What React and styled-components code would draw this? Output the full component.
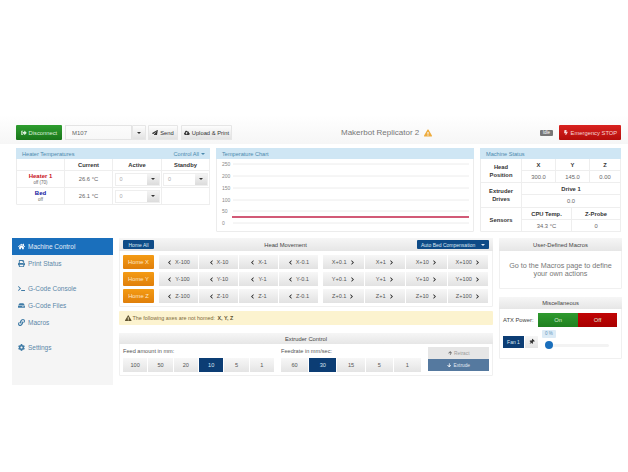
import React from "react";
import styled, { createGlobalStyle, css } from "styled-components";
import {
  FaHome, FaPrint, FaTerminal, FaHdd, FaLink, FaCog, FaChevronLeft, FaChevronRight,
  FaExclamationTriangle, FaBolt, FaPaperPlane, FaCloudUploadAlt, FaSignOutAlt,
  FaThumbtack, FaArrowUp, FaArrowDown,
} from "react-icons/fa";

const GlobalStyle = createGlobalStyle`
  html, body { margin: 0; padding: 0; background: #fff; }
  body { font-family: "Liberation Sans", Arial, sans-serif; color: #333; font-size: 6.5px; }
  * { box-sizing: border-box; }
`;

const Page = styled.div`
  width: 628px;
  height: 472px;
  overflow: hidden;
  padding-top: 115px;
`;

const Navbar = styled.div`
  height: 29px;
  padding: 10px 7px 0 16px;
  display: flex;
  align-items: flex-start;
  background: linear-gradient(to bottom, #fff, #f6f6f6);
`;

const Btn = styled.div`
  height: 15px;
  display: flex;
  align-items: center;
  justify-content: center;
  gap: 2px;
  font-size: 5.8px;
  color: #333;
  white-space: nowrap;
  border-radius: 1px;
  background: linear-gradient(to bottom, #fff, #e0e0e0);
  box-shadow: inset 0 0 0 1px #e6e6e6;
  width: ${(p) => p.$w}px;
  margin-left: ${(p) => p.$ml || 0}px;
  ${(p) => p.$kind === "green" && css`
    background: linear-gradient(to bottom, #2f9e30, #19761a);
    color: #dff0df;
    box-shadow: none;
  `}
  ${(p) => p.$kind === "red" && css`
    background: linear-gradient(to bottom, #d9231f, #b40d0b);
    color: #f5d5d5;
    box-shadow: none;
  `}
`;

const CmdInput = styled.div`
  width: 67px;
  height: 15px;
  margin-left: 3px;
  padding: 2px 6px;
  border: 1px solid #e4e4e4;
  color: #666;
  font-size: 6px;
  line-height: 10px;
`;

const Caret = styled.span`
  width: 0;
  height: 0;
  border-left: 2px solid transparent;
  border-right: 2px solid transparent;
  border-top: 2px solid ${(p) => p.$color || "#333"};
`;

const CaretBtn = styled(Btn)`
  width: 14px;
  margin-right: 2px;
`;

const Title = styled.div`
  flex: 1;
  display: flex;
  align-items: center;
  gap: 5px;
  height: 15px;
  margin-left: 109px;
  font-size: 8px;
  color: #777;
  svg { color: #eeac3e; font-size: 8px; }
`;

const IdleBadge = styled.span`
  width: 13px;
  height: 6px;
  margin: 5px 6px 0 0;
  background: #777;
  border-radius: 1px;
  color: #fff;
  font-size: 4.5px;
  line-height: 6px;
  text-align: center;
`;

const TopRow = styled.div`
  display: flex;
  gap: 6px;
  padding: 4px 7px 0 16px;
  align-items: flex-start;
`;

const InfoPanel = styled.div`
  width: ${(p) => p.$w}px;
  height: ${(p) => p.$h}px;
  border: 1px solid #ececec;
  border-radius: 1px;
  flex: none;
`;

const InfoHead = styled.div`
  height: 11px;
  margin: -1px -1px 0;
  padding: 0 5px 0 6px;
  background: #cfe6f4;
  color: #4c89ad;
  font-size: 5.6px;
  display: flex;
  align-items: center;
  justify-content: space-between;
`;

const HeadMenu = styled.span`
  display: flex;
  align-items: center;
  gap: 2px;
`;

const Grid = styled.div`
  display: grid;
  grid-template-columns: ${(p) => p.$cols};
`;

const Cell = styled.div`
  display: flex;
  flex-direction: column;
  align-items: center;
  justify-content: center;
  height: ${(p) => (p.$h ? `${p.$h}px` : "auto")};
  border-right: 1px solid #eee;
  border-bottom: 1px solid #eee;
  font-size: 5.8px;
  font-weight: ${(p) => (p.$b ? 700 : 400)};
  color: ${(p) => (p.$b ? "#333" : "#666")};
  line-height: 8px;
  text-align: center;
  grid-column: ${(p) => (p.$span ? `span ${p.$span}` : "auto")};
  grid-row: ${(p) => (p.$rows ? `span ${p.$rows}` : "auto")};
`;

const HeaterName = styled.div`
  font-weight: 700;
  font-size: 6px;
  line-height: 7px;
  color: ${(p) => p.$color};
`;

const HeaterState = styled.div`
  font-size: 4.5px;
  line-height: 6px;
  color: #666;
`;

const TempField = styled.div`
  width: 45px;
  height: 13px;
  display: flex;
  border: 1px solid #eee;
  color: #aaa;
  font-size: 5.5px;
  line-height: 11px;
  padding-left: 4px;
  justify-content: space-between;
`;

const TempCaret = styled.div`
  width: 12px;
  height: 11px;
  display: flex;
  align-items: center;
  justify-content: center;
  background: linear-gradient(to bottom, #f4f4f4, #dcdcdc);
`;

const Chart = styled.svg`
  display: block;
  width: 258px;
  height: 73px;
  text { font-family: "Liberation Sans", Arial, sans-serif; font-size: 5px; fill: #888; }
`;

const BottomRow = styled.div`
  display: flex;
  padding: 6px 6px 0 12px;
  align-items: flex-start;
`;

const Sidebar = styled.div`
  width: 101px;
  height: 147px;
  background: #f5f5f5;
  flex: none;
`;

const SideItem = styled.div`
  height: 17px;
  display: flex;
  align-items: center;
  gap: 3px;
  padding-left: 6px;
  font-size: 6.5px;
  margin-bottom: ${(p) => p.$gap || 0}px;
  color: ${(p) => (p.$active ? "#e3eef8" : "#5b87a8")};
  background: ${(p) => (p.$active ? "#1a6fbc" : "transparent")};
  svg { flex: none; width: 7px; height: 7px; color: ${(p) => (p.$active ? "#fff" : "#3f7ba6")}; }
`;

const Main = styled.div`
  width: 374px;
  margin-left: 6px;
  flex: none;
`;

const Panel = styled.div`
  border: 1px solid #f0f0f0;
  border-radius: 1px;
  margin-bottom: ${(p) => p.$mb || 0}px;
`;

const PanelHead = styled.div`
  height: ${(p) => p.$h || 13}px;
  margin: -1px -1px 0;
  display: flex;
  align-items: center;
  justify-content: space-between;
  padding: 0 4px;
  background: linear-gradient(to bottom, #f6f6f6, #e6e6e6);
  color: #444;
  font-size: 5.8px;
`;

const CenterHead = styled(PanelHead)`
  justify-content: center;
`;

const DarkBtn = styled.div`
  height: 9px;
  width: ${(p) => p.$w}px;
  padding: 0 4px;
  display: flex;
  align-items: center;
  justify-content: ${(p) => (p.$between ? "space-between" : "center")};
  background: #0e4b87;
  border-radius: 1px;
  color: #dbe7f3;
  font-size: 5px;
  white-space: nowrap;
`;

const MoveBody = styled.div`
  display: flex;
  flex-direction: column;
  gap: 3px;
  padding: 4px 3px 3px;
`;

const MoveRow = styled.div`
  display: flex;
  height: 14px;
`;

const HomeBtn = styled.div`
  width: 31px;
  margin-right: 5px;
  flex: none;
  display: flex;
  align-items: center;
  justify-content: center;
  background: linear-gradient(to bottom, #f49b14, #e07f0a);
  border-radius: 1px;
  color: #fde7c5;
  font-size: 5.8px;
`;

const MoveBtn = styled.div`
  flex: 1;
  display: flex;
  align-items: center;
  justify-content: center;
  gap: 3px;
  background: linear-gradient(to bottom, #f7f7f7, #e2e2e2);
  border-right: 1px solid #fff;
  color: #555;
  font-size: 5.6px;
  svg { font-size: 5px; color: #222; }
`;

const MoveGroup = styled.div`
  display: flex;
  width: ${(p) => p.$w}px;
  margin-right: ${(p) => p.$mr || 0}px;
`;

const Alert = styled.div`
  height: 14px;
  margin-bottom: 8px;
  padding-left: 6px;
  display: flex;
  align-items: center;
  gap: 1px;
  background: #fcf3cf;
  border-radius: 1px;
  color: #7c6a3c;
  font-size: 5.4px;
  svg { color: #5f5330; font-size: 6.5px; }
  b { color: #5f5330; margin-left: 1.5px; }
`;

const ExtruderBody = styled.div`
  display: flex;
  padding: 3px 3px 3px;
`;

const FieldLabel = styled.div`
  font-size: 5.6px;
  color: #555;
  line-height: 9px;
  margin-bottom: 2px;
`;

const FieldCol = styled.div`
  width: ${(p) => p.$w}px;
  margin-right: ${(p) => p.$mr}px;
`;

const ChoiceRow = styled.div`
  display: flex;
  height: 14px;
`;

const Choice = styled.div`
  flex: 1;
  display: flex;
  align-items: center;
  justify-content: center;
  font-size: 5.6px;
  color: ${(p) => (p.$on ? "#dbe7f3" : "#555")};
  background: ${(p) => (p.$on ? "#0c3d74" : "linear-gradient(to bottom, #f7f7f7, #e4e4e4)")};
  border-right: 1px solid #fff;
`;

const DriveCol = styled.div`
  width: 61px;
  display: flex;
  flex-direction: column;
`;

const DriveBtn = styled.div`
  height: ${(p) => p.$h}px;
  display: flex;
  align-items: center;
  justify-content: center;
  gap: 2px;
  font-size: 4.8px;
  background: ${(p) => (p.$muted ? "#e6e6e6" : "#55799f")};
  color: ${(p) => (p.$muted ? "#9a9a9a" : "#e3ebf3")};
  svg { font-size: 4.5px; color: ${(p) => (p.$muted ? "#666" : "#fff")}; }
`;

const Side = styled.div`
  width: 123px;
  margin-left: 6px;
  flex: none;
`;

const MacroNote = styled.div`
  height: 37px;
  display: flex;
  align-items: center;
  justify-content: center;
  text-align: center;
  color: #777;
  font-size: 7.2px;
  line-height: 8px;
  padding: 0 7px;
`;

const AtxRow = styled.div`
  display: flex;
  align-items: center;
  padding: 4px 4px 0 3px;
  font-size: 5.8px;
  color: #444;
`;

const AtxLabel = styled.div`
  width: 35px;
`;

const ToggleBtn = styled.div`
  width: ${(p) => p.$w}px;
  height: 14px;
  display: flex;
  align-items: center;
  justify-content: center;
  color: #d9ecd9;
  font-size: 5.8px;
  background: ${(p) => (p.$on ? "linear-gradient(to bottom, #2f9a2f, #1f801f)" : "linear-gradient(to bottom, #c10505, #a80000)")};
`;

const FanRow = styled.div`
  display: flex;
  padding: 6px 4px 0 3px;
  align-items: flex-start;
  position: relative;
  height: 31px;
`;

const FanBtn = styled.div`
  width: 21px;
  height: 12px;
  margin-top: 3px;
  display: flex;
  align-items: center;
  justify-content: center;
  background: #0c3d74;
  color: #dbe7f3;
  font-size: 5px;
`;

const PinBtn = styled.div`
  width: 13px;
  height: 12px;
  margin: 3px 0 0 1px;
  display: flex;
  align-items: center;
  justify-content: center;
  background: linear-gradient(to bottom, #f6f6f6, #e2e2e2);
  svg { font-size: 5.5px; color: #333; transform: rotate(45deg); }
`;

const SliderTrack = styled.div`
  width: 61px;
  height: 3px;
  margin: 11px 0 0 10px;
  background: #f3f3f3;
  border-radius: 2px;
`;

const SliderHandle = styled.div`
  position: absolute;
  left: 45px;
  top: 14px;
  width: 8px;
  height: 8px;
  border-radius: 50%;
  background: #1a6fbc;
`;

const SliderTip = styled.div`
  position: absolute;
  left: 42px;
  top: 3px;
  width: 14px;
  height: 8px;
  background: #dcebf6;
  border-radius: 1px;
  color: #5f93ba;
  font-size: 4.5px;
  line-height: 8px;
  text-align: center;
`;

const ticks = [
  [250, 5], [200, 17], [150, 29], [100, 41], [50, 52], [0, 64],
];

const moves = ["100", "10", "1", "0.1"];
const movesUp = ["0.1", "1", "10", "100"];

function AxisRow({ axis }) {
  return (
    <MoveRow>
      <HomeBtn>Home {axis}</HomeBtn>
      <MoveGroup $w={160} $mr={4}>
        {moves.map((m) => (
          <MoveBtn key={m}><FaChevronLeft />{axis}-{m}</MoveBtn>
        ))}
      </MoveGroup>
      <MoveGroup $w={166}>
        {movesUp.map((m) => (
          <MoveBtn key={m}>{axis}+{m}<FaChevronRight /></MoveBtn>
        ))}
      </MoveGroup>
    </MoveRow>
  );
}

export default function App() {
  return (
    <Page>
      <GlobalStyle />
      <Navbar>
        <Btn $kind="green" $w={46}><FaSignOutAlt />Disconnect</Btn>
        <CmdInput>M107</CmdInput>
        <CaretBtn $w={14}><Caret /></CaretBtn>
        <Btn $w={30}><FaPaperPlane />Send</Btn>
        <Btn $w={51} $ml={3}><FaCloudUploadAlt />Upload &amp; Print</Btn>
        <Title>Makerbot Replicator 2 <FaExclamationTriangle /></Title>
        <IdleBadge>Idle</IdleBadge>
        <Btn $kind="red" $w={62}><FaBolt />Emergency STOP</Btn>
      </Navbar>

      <TopRow>
        <InfoPanel $w={194} $h={57}>
          <InfoHead>
            Heater Temperatures
            <HeadMenu>Control All <Caret $color="#4c89ad" /></HeadMenu>
          </InfoHead>
          <Grid $cols="48px 48px 49px 48px">
            <Cell $h={12} />
            <Cell $b>Current</Cell>
            <Cell $b>Active</Cell>
            <Cell $b>Standby</Cell>
            <Cell $h={17}>
              <HeaterName $color="#c8101a">Heater 1</HeaterName>
              <HeaterState>off (70)</HeaterState>
            </Cell>
            <Cell>26.6 °C</Cell>
            <Cell><TempField>0<TempCaret><Caret /></TempCaret></TempField></Cell>
            <Cell><TempField>0<TempCaret><Caret /></TempCaret></TempField></Cell>
            <Cell $h={17}>
              <HeaterName $color="#10109c">Bed</HeaterName>
              <HeaterState>off</HeaterState>
            </Cell>
            <Cell>26.1 °C</Cell>
            <Cell><TempField>0<TempCaret><Caret /></TempCaret></TempField></Cell>
            <Cell />
          </Grid>
        </InfoPanel>

        <InfoPanel $w={258} $h={84}>
          <InfoHead>Temperature Chart</InfoHead>
          <Chart viewBox="0 0 258 73">
            {ticks.map(([label, y]) => (
              <g key={label}>
                <text x="5" y={y + 2}>{label}</text>
                <line x1="16" x2="252" y1={y} y2={y} stroke="#ececec" strokeWidth="1" />
              </g>
            ))}
            <line x1="15" x2="252" y1="58" y2="58" stroke="#c3234a" strokeWidth="1.6" />
          </Chart>
        </InfoPanel>

        <InfoPanel $w={141} $h={84}>
          <InfoHead>Machine Status</InfoHead>
          <Grid $cols="41px 34px 34px 31px">
            <Cell $b $rows={2}>Head<br />Position</Cell>
            <Cell $b $h={12}>X</Cell>
            <Cell $b>Y</Cell>
            <Cell $b>Z</Cell>
            <Cell $h={12}>300.0</Cell>
            <Cell>145.0</Cell>
            <Cell>0.00</Cell>
            <Cell $b $rows={2}>Extruder<br />Drives</Cell>
            <Cell $b $span={3} $h={12}>Drive 1</Cell>
            <Cell $span={3} $h={13}>0.0</Cell>
          </Grid>
          <Grid $cols="41px 50px 49px">
            <Cell $b $rows={2}>Sensors</Cell>
            <Cell $b $h={12}>CPU Temp.</Cell>
            <Cell $b>Z-Probe</Cell>
            <Cell $h={12}>34.3 °C</Cell>
            <Cell>0</Cell>
          </Grid>
        </InfoPanel>
      </TopRow>

      <BottomRow>
        <Sidebar>
          <SideItem $active><FaHome />Machine Control</SideItem>
          <SideItem $gap={8}><FaPrint />Print Status</SideItem>
          <SideItem><FaTerminal />G-Code Console</SideItem>
          <SideItem><FaHdd />G-Code Files</SideItem>
          <SideItem $gap={8}><FaLink />Macros</SideItem>
          <SideItem><FaCog />Settings</SideItem>
        </Sidebar>

        <Main>
          <Panel $mb={4}>
            <PanelHead>
              <DarkBtn $w={31}>Home All</DarkBtn>
              <span>Head Movement</span>
              <DarkBtn $w={72} $between>Auto Bed Compensation <Caret $color="#dbe7f3" /></DarkBtn>
            </PanelHead>
            <MoveBody>
              <AxisRow axis="X" />
              <AxisRow axis="Y" />
              <AxisRow axis="Z" />
            </MoveBody>
          </Panel>

          <Alert>
            <FaExclamationTriangle />The following axes are not homed: <b>X, Y, Z</b>
          </Alert>

          <Panel>
            <CenterHead $h={11}>Extruder Control</CenterHead>
            <ExtruderBody>
              <FieldCol $w={152} $mr={6}>
                <FieldLabel>Feed amount in mm:</FieldLabel>
                <ChoiceRow>
                  {["100", "50", "20", "10", "5", "1"].map((v) => (
                    <Choice key={v} $on={v === "10"}>{v}</Choice>
                  ))}
                </ChoiceRow>
              </FieldCol>
              <FieldCol $w={141} $mr={6}>
                <FieldLabel>Feedrate in mm/sec:</FieldLabel>
                <ChoiceRow>
                  {["60", "30", "15", "5", "1"].map((v) => (
                    <Choice key={v} $on={v === "30"}>{v}</Choice>
                  ))}
                </ChoiceRow>
              </FieldCol>
              <DriveCol>
                <DriveBtn $h={12} $muted><FaArrowUp />Retract</DriveBtn>
                <DriveBtn $h={12}><FaArrowDown />Extrude</DriveBtn>
              </DriveCol>
            </ExtruderBody>
          </Panel>
        </Main>

        <Side>
          <Panel $mb={8}>
            <CenterHead>User-Defined Macros</CenterHead>
            <MacroNote>Go to the Macros page to define your own actions</MacroNote>
          </Panel>
          <Panel>
            <CenterHead $h={12}>Miscellaneous</CenterHead>
            <AtxRow>
              <AtxLabel>ATX Power:</AtxLabel>
              <ToggleBtn $on $w={40}>On</ToggleBtn>
              <ToggleBtn $w={39}>Off</ToggleBtn>
            </AtxRow>
            <FanRow>
              <FanBtn>Fan 1</FanBtn>
              <PinBtn><FaThumbtack /></PinBtn>
              <SliderTrack />
              <SliderHandle />
              <SliderTip>0 %</SliderTip>
            </FanRow>
          </Panel>
        </Side>
      </BottomRow>
    </Page>
  );
}
